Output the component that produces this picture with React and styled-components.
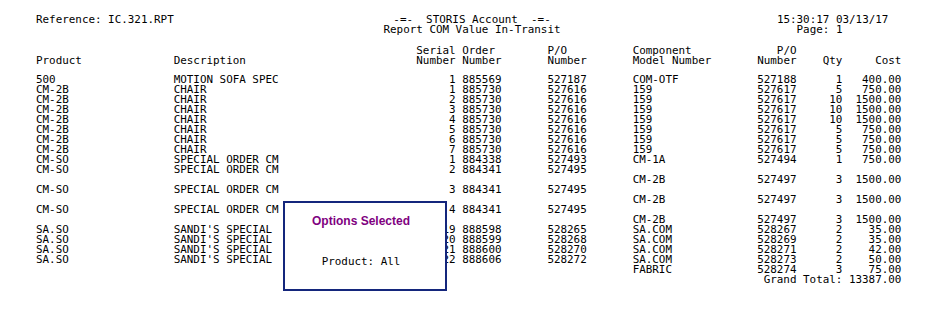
import React from "react";
import styled, { createGlobalStyle } from "styled-components";

const rows = [
  ["500", "MOTION SOFA SPEC", "1", "885569", "527187", "COM-OTF", "527188", "1", "400.00"],
  ["CM-2B", "CHAIR", "1", "885730", "527616", "159", "527617", "5", "750.00"],
  ["CM-2B", "CHAIR", "2", "885730", "527616", "159", "527617", "10", "1500.00"],
  ["CM-2B", "CHAIR", "3", "885730", "527616", "159", "527617", "10", "1500.00"],
  ["CM-2B", "CHAIR", "4", "885730", "527616", "159", "527617", "10", "1500.00"],
  ["CM-2B", "CHAIR", "5", "885730", "527616", "159", "527617", "5", "750.00"],
  ["CM-2B", "CHAIR", "6", "885730", "527616", "159", "527617", "5", "750.00"],
  ["CM-2B", "CHAIR", "7", "885730", "527616", "159", "527617", "5", "750.00"],
  ["CM-SO", "SPECIAL ORDER CM", "1", "884338", "527493", "CM-1A", "527494", "1", "750.00"],
  ["CM-SO", "SPECIAL ORDER CM", "2", "884341", "527495", "", "", "", ""],
  ["", "", "", "", "", "CM-2B", "527497", "3", "1500.00"],
  ["CM-SO", "SPECIAL ORDER CM", "3", "884341", "527495", "", "", "", ""],
  ["", "", "", "", "", "CM-2B", "527497", "3", "1500.00"],
  ["CM-SO", "SPECIAL ORDER CM", "4", "884341", "527495", "", "", "", ""],
  ["", "", "", "", "", "CM-2B", "527497", "3", "1500.00"],
  ["SA.SO", "SANDI'S SPECIAL", "19", "888598", "528265", "SA.COM", "528267", "2", "35.00"],
  ["SA.SO", "SANDI'S SPECIAL", "20", "888599", "528268", "SA.COM", "528269", "2", "35.00"],
  ["SA.SO", "SANDI'S SPECIAL", "21", "888600", "528270", "SA.COM", "528271", "2", "42.00"],
  ["SA.SO", "SANDI'S SPECIAL", "22", "888606", "528272", "SA.COM", "528273", "2", "50.00"],
  ["", "", "", "", "", "FABRIC", "528274", "3", "75.00"],
];

// right aligned columns
const rightCols = [2, 6, 7, 8];

function App() {
  return (
    <>
      <GlobalStyle />
      <Page>
        <Header>
          <span>Reference: IC.321.RPT</span>
          <Title>
            <div>-=-  STORIS Account  -=-</div>
            <div>Report COM Value In-Transit</div>
          </Title>
          <span />
          <Stamp>
            <div>15:30:17 03/13/17</div>
            <div>   Page: 1</div>
          </Stamp>
        </Header>

        <ColumnHeads>
          <Row>
            <Cell />
            <Cell />
            <Cell $right>Serial</Cell>
            <Cell $pad>Order</Cell>
            <Cell>P/O</Cell>
            <Cell>Component</Cell>
            <Cell $right>P/O</Cell>
            <Cell />
            <Cell />
          </Row>
          <Row>
            <Cell>Product</Cell>
            <Cell>Description</Cell>
            <Cell $right>Number</Cell>
            <Cell $pad>Number</Cell>
            <Cell>Number</Cell>
            <Cell>Model Number</Cell>
            <Cell $right>Number</Cell>
            <Cell $right>Qty</Cell>
            <Cell $right>Cost</Cell>
          </Row>
        </ColumnHeads>

        <Body>
          {rows.map((r, i) => (
            <Row key={i}>
              {r.map((v, j) => (
                <Cell key={j} $right={rightCols.includes(j)} $pad={j === 3}>
                  {v}
                </Cell>
              ))}
            </Row>
          ))}
          <Row>
            <Total>Grand Total: 13387.00</Total>
          </Row>
        </Body>

        <Options>
          <OptionsTitle>Options Selected</OptionsTitle>
          <OptionsLine>Product: All</OptionsLine>
        </Options>
      </Page>
    </>
  );
}

const GlobalStyle = createGlobalStyle`
  body {
    margin: 0;
    background: #fff;
  }
`;

const Page = styled.div`
  position: relative;
  width: 933px;
  height: 325px;
  box-sizing: border-box;
  padding: 15px 0 0 36px;
  font-family: "DejaVu Sans Mono", monospace;
  font-size: 10.9px;
  line-height: 10px;
  color: #000;
  white-space: pre;
  overflow: hidden;
`;

const Header = styled.div`
  display: grid;
  grid-template-columns: 53ch 27ch 33ch 19ch;
`;

const Title = styled.div`
  text-align: center;
`;

const Stamp = styled.div``;

const ColumnHeads = styled.div`
  margin-top: 11px;
`;

const Body = styled.div`
  margin-top: 9px;
`;

const Row = styled.div`
  display: grid;
  grid-template-columns: 21ch 37ch 6ch 14ch 13ch 19ch 6ch 7ch 9ch;
  height: 10px;
`;

const Cell = styled.div`
  text-align: ${(p) => (p.$right ? "right" : "left")};
  padding-left: ${(p) => (p.$pad ? "1ch" : "0")};
`;

const Total = styled.div`
  grid-column: 6 / 10;
  text-align: right;
`;

const Options = styled.div`
  position: absolute;
  left: 283px;
  top: 201px;
  width: 164px;
  height: 90px;
  box-sizing: border-box;
  border: 2px solid #14267c;
  background: #fff;
  display: flex;
  flex-direction: column;
  align-items: center;
  padding-right: 8px;
`;

const OptionsTitle = styled.div`
  margin-top: 11px;
  font-family: "Liberation Sans", Arial, sans-serif;
  font-weight: bold;
  font-size: 12px;
  line-height: 14px;
  color: #800080;
`;

const OptionsLine = styled.div`
  margin-top: 29px;
  color: #000;
`;

export default App;
